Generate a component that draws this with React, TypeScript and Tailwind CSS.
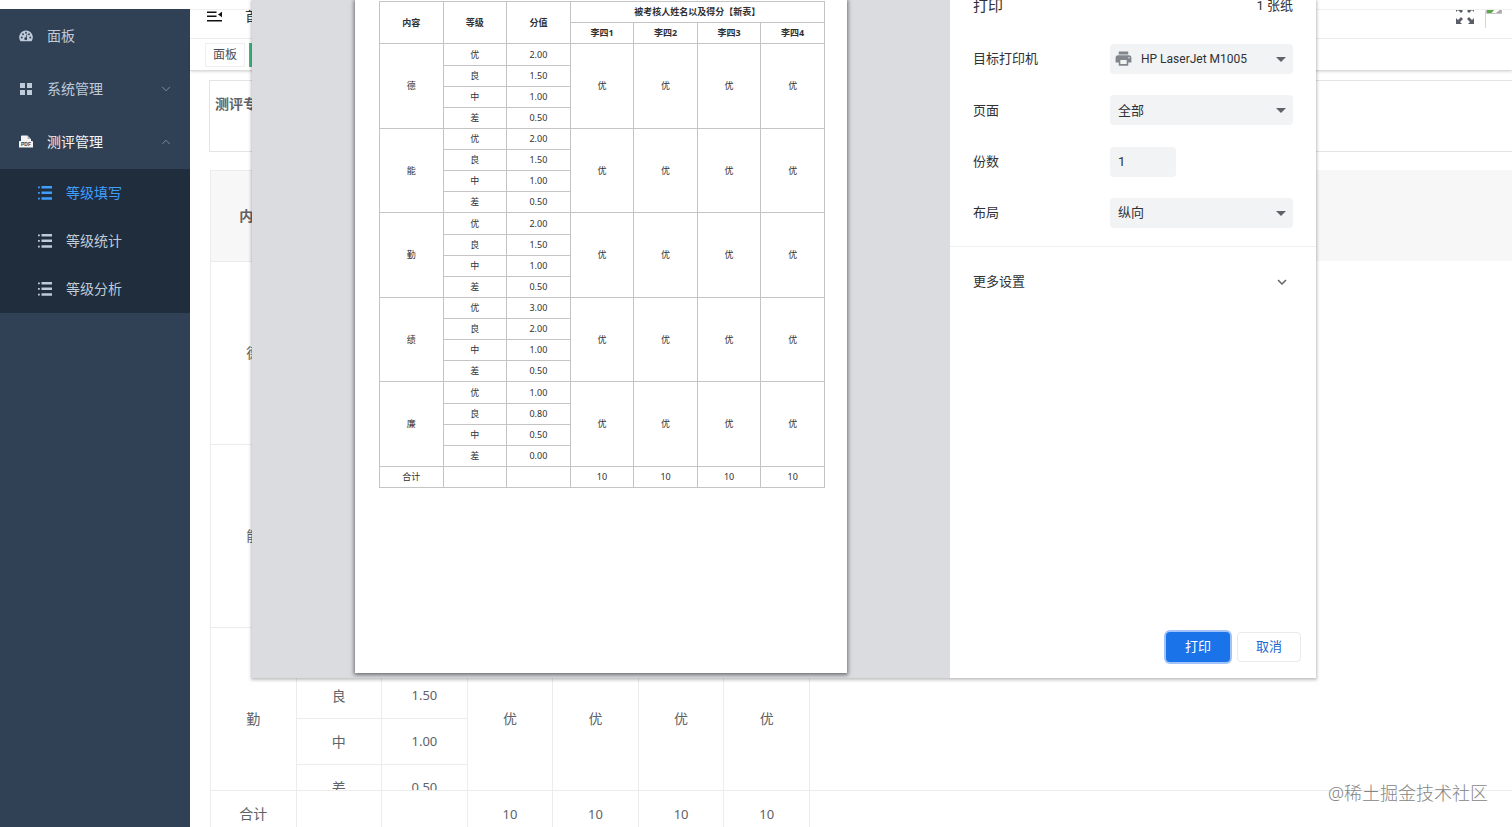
import { Fragment } from "react";
import type { ReactNode } from "react";
import clsx from "clsx";
import { ChevronDown, ChevronUp } from "lucide-react";
import { MdPrint, MdExpandMore } from "react-icons/md";

const people = ["李四1", "李四2", "李四3", "李四4"];

const groups = [
  { name: "德", levels: [["优", "2.00"], ["良", "1.50"], ["中", "1.00"], ["差", "0.50"]] },
  { name: "能", levels: [["优", "2.00"], ["良", "1.50"], ["中", "1.00"], ["差", "0.50"]] },
  { name: "勤", levels: [["优", "2.00"], ["良", "1.50"], ["中", "1.00"], ["差", "0.50"]] },
  { name: "绩", levels: [["优", "3.00"], ["良", "2.00"], ["中", "1.00"], ["差", "0.50"]] },
  { name: "廉", levels: [["优", "1.00"], ["良", "0.80"], ["中", "0.50"], ["差", "0.00"]] },
];

function DashboardIcon() {
  return (
    <svg viewBox="0 0 28 24" className="h-3 w-3.5" aria-hidden="true">
      <path fill="currentColor" d="M14 1a13.500 13.500 0 0 0-11.400 20.800c.3.500.8.700 1.300.7h20.200c.5 0 1-.2 1.300-.7A13.500 13.500 0 0 0 14 1Z" />
      <g fill="#304156">
        <circle cx="5.500" cy="15" r="1.900" />
        <circle cx="8" cy="8.500" r="1.900" />
        <circle cx="14" cy="5.500" r="1.900" />
        <circle cx="20" cy="8.500" r="1.900" />
        <circle cx="22.500" cy="15" r="1.900" />
        <circle cx="13.500" cy="17.500" r="2.900" />
      </g>
      <path stroke="#304156" strokeWidth="1.700" strokeLinecap="round" d="m13.800 17 2-7.500" />
    </svg>
  );
}

function GridIcon() {
  return (
    <svg viewBox="0 0 12 12" className="mx-px size-3" fill="currentColor" aria-hidden="true">
      <path d="M0 0h5v5H0zM7 0h5v5H7zM0 7h5v5H0zM7 7h5v5H7z" />
    </svg>
  );
}

function PdfIcon() {
  return (
    <svg viewBox="0 0 14 14" className="size-3.5" aria-hidden="true">
      <path fill="currentColor" d="M2 1.500c0-.6.4-1 1-1h5.500L12 4v2h1.300c.4 0 .7.300.7.700v5.800H0V6.700C0 6.300.3 6 .7 6H2Z" />
      <path fill="#304156" d="M8.500.5 12 4H8.500Z" opacity=".35" />
      <text x="7" y="11" textAnchor="middle" fontSize="5" fontWeight="700" fontFamily="Liberation Sans" fill="#304156">
        PDF
      </text>
    </svg>
  );
}

function ListIcon() {
  return (
    <svg viewBox="0 0 14 14" className="size-3.5" fill="currentColor" aria-hidden="true">
      <path d="M0 .5h1.800v1.800H0zM3.500 0H14v2.500H3.500zM0 6h1.800v1.800H0zM3.500 5.600H14v2.500H3.500zM0 11.700h1.800v1.800H0zM3.500 11.300H14v2.500H3.500z" />
    </svg>
  );
}

function FoldIcon() {
  return (
    <svg viewBox="0 0 16 11" className="h-[11px] w-4" fill="#111" aria-hidden="true">
      <path d="M0 .5h9.500V2H0zM0 4.600h9.500V6H0zM0 9h15v1.600H0zM15 .8v5.400L11 3.500z" />
    </svg>
  );
}

function FullscreenIcon() {
  return (
    <svg viewBox="0 0 18 18" className="size-[18px]" fill="#5a5e66" aria-hidden="true">
      <path d="M0 0h6L4 2l3 3-2 2-3-3-2 2zM18 0v6l-2-2-3 3-2-2 3-3-2-2zM0 18v-6l2 2 3-3 2 2-3 3 2 2zM18 18h-6l2-2-3-3 2-2 3 3 2-2z" />
    </svg>
  );
}

function BrokenImage() {
  return (
    <svg viewBox="0 0 16 16" className="size-4" role="img" aria-label="头像">
      <path d="M.5.5h11l4 4v11H.5z" fill="#fff" stroke="#c5c5c5" />
      <path d="M1 15v-3l5-4.500h6L5.500 15z" fill="#5aa84a" />
      <path d="M15.500 10.500V15H10z" fill="#a9a9a9" />
    </svg>
  );
}

function MenuItem({ icon, label, arrow, open }: { icon: ReactNode; label: string; arrow?: boolean; open?: boolean }) {
  return (
    <a href="#" className={clsx("flex h-[53px] items-center pr-[17px] pl-[19px]", open ? "text-[#f4f4f5]" : "text-[#bfcbd9]")}>
      {icon}
      <span className="ml-3.5 flex-1">{label}</span>
      {arrow && (open ? <ChevronUp size={14} strokeWidth={1.5} className="text-[#909399]" /> : <ChevronDown size={14} strokeWidth={1.5} className="text-[#909399]" />)}
    </a>
  );
}

function Sidebar() {
  return (
    <nav className="w-[190px] shrink-0 bg-[#304156] text-sm">
      <MenuItem icon={<DashboardIcon />} label="面板" />
      <MenuItem icon={<GridIcon />} label="系统管理" arrow />
      <MenuItem icon={<PdfIcon />} label="测评管理" arrow open />
      <div className="mt-px bg-[#1f2d3d]">
        {["等级填写", "等级统计", "等级分析"].map((label, i) => (
          <a key={label} href="#" className={clsx("flex h-12 items-center gap-3.5 pl-[38px]", i === 0 ? "text-[#409eff]" : "text-[#bfcbd9]")}>
            <ListIcon />
            {label}
          </a>
        ))}
      </div>
    </nav>
  );
}

function Topbar() {
  return (
    <header>
      <div className="flex h-[30px] items-start overflow-hidden border-t border-b border-[#f0f0f0] pl-[17px]">
        <button type="button" aria-label="收起菜单" className="h-3">
          <FoldIcon />
        </button>
        <span className="-mt-1 ml-[22px] text-sm text-[#303133]">首页</span>
        <button type="button" aria-label="全屏" className="-mt-1 ml-auto">
          <FullscreenIcon />
        </button>
        <div className="-mt-3 ml-[11px] h-[30px] w-[27px] border-l border-[#d5d5d5]">
          <BrokenImage />
        </div>
      </div>
      <div className="flex h-8 items-start gap-1 border-b border-[#dcdcdc] pt-1 pl-[15px] text-xs shadow-sm">
        <a href="#" className="flex h-6 items-center border border-[#eeeeee] px-[7px] text-[#495060]">
          面板
        </a>
        <a href="#" aria-label="等级填写" className="h-6 w-16 bg-[#42b983]" />
      </div>
    </header>
  );
}

const cell = "border border-[#ececec]";
const totalCell = "border-x border-[#ececec]";

function ScoreTable() {
  return (
    <div className="mt-[18px] ml-5 flex min-h-0 flex-1 flex-col text-sm text-[#606266]">
      <div className="min-h-0 flex-1 overflow-hidden">
        <div className="bg-linear-to-b from-[#f7f7f7] from-[91px] to-transparent to-[91px]">
          <table className="w-[600px] table-fixed border-collapse text-center">
            <thead>
              <tr className="h-[45px]">
                <th rowSpan={2} className={cell}>内容</th>
                <th rowSpan={2} className={cell}>等级</th>
                <th rowSpan={2} className={cell}>分值</th>
                <th colSpan={4} className={cell}>被考核人姓名以及得分【新表】</th>
              </tr>
              <tr className="h-[46px]">
                {people.map((p) => (
                  <th key={p} className={cell}>{p}</th>
                ))}
              </tr>
            </thead>
            <tbody>
              {groups.map((g) => (
                <Fragment key={g.name}>
                  {g.levels.map(([level, score], i) => (
                    <tr key={level} className={i === 0 ? "h-[45px]" : "h-[46px]"}>
                      {i === 0 && <td rowSpan={4} className={cell}>{g.name}</td>}
                      <td className={cell}>{level}</td>
                      <td className={clsx(cell, "text-[13px]")}>{score}</td>
                      {i === 0 && people.map((p) => <td key={p} rowSpan={4} className={cell}>优</td>)}
                    </tr>
                  ))}
                </Fragment>
              ))}
            </tbody>
          </table>
        </div>
      </div>
      <div className="h-[37px] overflow-hidden border-t border-[#ececec]">
        <table className="w-[600px] table-fixed border-collapse text-center">
          <tbody>
            <tr className="h-[46px]">
              <td className={totalCell}>合计</td>
              <td className={totalCell} />
              <td className={totalCell} />
              {people.map((p) => (
                <td key={p} className={clsx(totalCell, "text-[13px]")}>10</td>
              ))}
            </tr>
          </tbody>
        </table>
      </div>
    </div>
  );
}

const line = "border border-[#c4c4c4]";

function PrintSheet() {
  return (
    <div className="h-[673px] w-[492px] bg-white pt-px pr-[22px] pl-6 shadow-[0_1px_4px_1px_rgba(0,0,0,0.5)]">
      <table className="w-full table-fixed border-collapse text-center text-[9px] leading-3 text-[#303133]">
        <thead>
          <tr className="h-[21px]">
            <th rowSpan={2} className={line}>内容</th>
            <th rowSpan={2} className={line}>等级</th>
            <th rowSpan={2} className={line}>分值</th>
            <th colSpan={4} className={line}>被考核人姓名以及得分【新表】</th>
          </tr>
          <tr className="h-[21px]">
            {people.map((p) => (
              <th key={p} className={line}>{p}</th>
            ))}
          </tr>
        </thead>
        <tbody>
          {groups.map((g, n) => (
            <Fragment key={g.name}>
              {g.levels.map(([level, score], i) => (
                <tr key={level} className={i === 0 && n % 2 === 0 ? "h-[22px]" : "h-[21px]"}>
                  {i === 0 && <td rowSpan={4} className={line}>{g.name}</td>}
                  <td className={line}>{level}</td>
                  <td className={line}>{score}</td>
                  {i === 0 && people.map((p) => <td key={p} rowSpan={4} className={line}>优</td>)}
                </tr>
              ))}
            </Fragment>
          ))}
          <tr className="h-[21px]">
            <td className={line}>合计</td>
            <td className={line} />
            <td className={line} />
            {people.map((p) => (
              <td key={p} className={line}>10</td>
            ))}
          </tr>
        </tbody>
      </table>
    </div>
  );
}

function SelectRow({ id, label, value, icon }: { id: string; label: string; value: string; icon?: ReactNode }) {
  return (
    <div className="flex items-center justify-between">
      <label htmlFor={id}>{label}</label>
      <div className="relative w-[183px]">
        {icon}
        <select id={id} className={clsx("h-[30px] w-full appearance-none rounded-sm bg-[#f1f3f4] pr-7", icon ? "pl-[31px] text-xs" : "pl-2")}>
          <option>{value}</option>
        </select>
        <svg viewBox="0 0 10 5" className="pointer-events-none absolute top-[13px] right-[7px] h-[5px] w-2.5" fill="#5f6368" aria-hidden="true">
          <path d="M0 0h10L5 5z" />
        </svg>
      </div>
    </div>
  );
}

function PrintDialog() {
  return (
    <div
      role="dialog"
      aria-label="打印"
      className="absolute top-0 right-[196px] left-[252px] flex h-[678px] overflow-hidden bg-white shadow-[0_1px_3px_1px_rgba(0,0,0,0.25)]"
    >
      <div className="flex flex-1 justify-center bg-[#dadce0] font-['Noto_Sans','Noto_Sans_CJK_SC',sans-serif]">
        <PrintSheet />
      </div>
      <div className="flex w-[366px] flex-col font-[Roboto,'Noto_Sans_CJK_SC',sans-serif] text-[13px] text-[#303134]">
        <div className="-mt-1.5 flex h-6 items-center justify-between px-[23px]">
          <h1 className="text-[15px]">打印</h1>
          <span>1 张纸</span>
        </div>
        <div className="mt-[26px] flex h-[184px] flex-col justify-between px-[23px]">
          <SelectRow
            id="printer"
            label="目标打印机"
            value="HP LaserJet M1005"
            icon={<MdPrint size={19} className="pointer-events-none absolute top-[5px] left-1 text-[#80868b]" />}
          />
          <SelectRow id="pages" label="页面" value="全部" />
          <div className="flex items-center justify-between">
            <label htmlFor="copies">份数</label>
            <div className="w-[183px]">
              <input id="copies" type="text" defaultValue="1" className="h-[30px] w-[66px] rounded-sm bg-[#f1f3f4] px-2" />
            </div>
          </div>
          <SelectRow id="layout" label="布局" value="纵向" />
        </div>
        <button type="button" className="mt-[18px] flex h-[70px] items-center justify-between border-t border-[#eeeff0] pr-[25px] pl-[23px]">
          更多设置
          <MdExpandMore size={18} className="text-[#5f6368]" />
        </button>
        <div className="mt-auto flex justify-end gap-[7px] pr-[15px] pb-4">
          <button type="button" className="h-[30px] w-16 rounded-sm bg-[#1a73e8] text-white ring-2 ring-[#8ab4f8]/80">
            打印
          </button>
          <button type="button" className="h-[30px] w-16 rounded-sm border border-[#e8eaed] text-[#1a67d2]">
            取消
          </button>
        </div>
      </div>
    </div>
  );
}

export default function App() {
  return (
    <div className="relative flex h-screen overflow-hidden bg-white pt-[9px] font-['Noto_Sans','Noto_Sans_CJK_SC',sans-serif]">
      <Sidebar />
      <main className="flex min-w-0 flex-1 flex-col">
        <Topbar />
        <div className="mt-[9px] ml-[19px] h-[72px] border-y border-l border-[#e4e4e4] px-[5px] pt-[13px] text-sm font-bold text-[#606266]">
          测评专
        </div>
        <ScoreTable />
      </main>
      <PrintDialog />
      <p className="absolute right-6 bottom-5 text-lg font-light text-[#858585]">@稀土掘金技术社区</p>
    </div>
  );
}
